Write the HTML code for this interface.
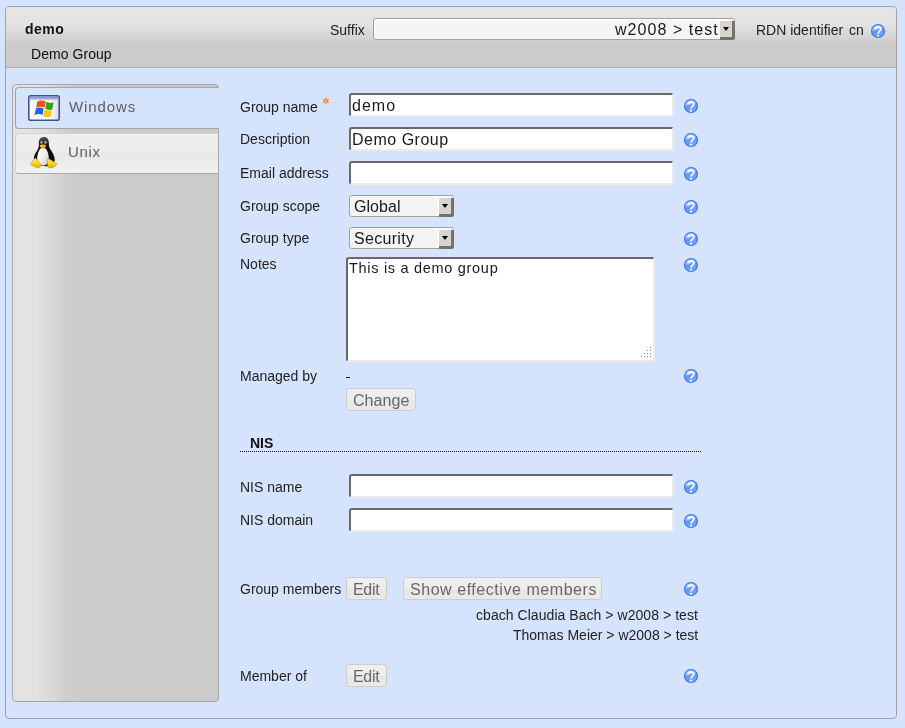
<!DOCTYPE html>
<html><head><meta charset="utf-8">
<style>
*{box-sizing:border-box;margin:0;padding:0}
html,body{width:905px;height:728px;overflow:hidden;background:#d6e3fc;font-family:"Liberation Sans",sans-serif;font-size:14px;color:#222}
.a{will-change:transform;position:absolute;white-space:nowrap;line-height:16px}
#box{position:absolute;left:5px;top:6px;width:892px;height:713px;border:1px solid #a3a3a3;border-radius:4px;background:#d6e3fc;overflow:hidden}
#hdr{position:absolute;left:0;top:0;width:890px;height:61px;background:linear-gradient(#e5e5e5 0px,#e3e3e3 17px,#cbcbcb 38px,#cbcbcb 61px);border-bottom:1px solid #aaa}
.inp{position:absolute;background:#fff;border-radius:3px;border-top:2px solid #6b6966;border-left:2px solid #6b6966;border-bottom:2px solid #ecebe9;border-right:2px solid #ecebe9}
.sel{position:absolute;background:#f4f4f4;border:1px solid #a0a0a0;border-radius:3px;box-shadow:inset 1px 1px 0 #fff}
.sel .btn{position:absolute;right:-1px;bottom:-1px;width:15px;height:19px;background:#d8d4d0;border-right:3px solid #75716d;border-bottom:3px solid #75716d;border-bottom-right-radius:3px;box-shadow:-1px -1px 0 #fff}
.sel .btn:after{content:"";position:absolute;left:3px;top:6px;border-left:3px solid transparent;border-right:3px solid transparent;border-top:4px solid #000}
.but{position:absolute;background:linear-gradient(#efefef 0%,#ededed 50%,#e6e6e6 51%,#e9e9e9 100%);border:1px solid #cdcdcd;border-radius:3px}
.help{position:absolute;width:16px;height:16px}
.c16{font-size:16px;line-height:18px;color:#1a1a1a}
.bt{font-size:16px;line-height:18px;color:#686868}
</style></head><body>
<svg width="0" height="0" style="position:absolute">
 <defs>
  <linearGradient id="hg" x1="0" y1="0" x2="0.3" y2="1">
   <stop offset="0" stop-color="#d9e6ff"/>
   <stop offset="0.42" stop-color="#9dbdfa"/>
   <stop offset="0.55" stop-color="#6195f5"/>
   <stop offset="1" stop-color="#7aa6f8"/>
  </linearGradient>
  
 </defs>
</svg>

<div id="box">
 <div id="hdr"></div>
</div>

<!-- header content (page coords) -->
<div class="a" style="left:25px;top:21px;font-weight:bold;color:#111;letter-spacing:0.45px">demo</div>
<div class="a" style="left:31px;top:46px;color:#111;letter-spacing:0.05px">Demo Group</div>
<div class="a" style="left:330px;top:22px">Suffix</div>
<div class="sel" style="left:373px;top:18px;width:362px;height:22px">
 <div class="a c16" style="left:241px;top:2px;letter-spacing:1.05px">w2008 &gt; test</div>
 <div class="btn"></div>
</div>
<div class="a" style="left:756px;top:22px">RDN identifier</div>
<div class="a" style="left:849px;top:22px">cn</div>
<svg class="help" style="left:870px;top:23px" viewBox="0 0 16 16"><circle cx="8" cy="8" r="6.45" fill="url(#hg)" stroke="#3a78f5" stroke-width="1.2"/> <path d="M5.3 6.3 C5.3 3.5 10.8 3.2 10.8 6.0 C10.8 7.9 8.2 8.2 8.0 10.5" fill="none" stroke="#fff" stroke-width="1.8"/> <rect x="7.0" y="11.8" width="1.9" height="1.8" fill="#fff"/></svg>

<!-- tabs -->
<div style="position:absolute;left:12px;top:84px;width:207px;height:618px;border:1px solid #a8a8a8;border-radius:4px;background:linear-gradient(90deg,#e3e3e3 0px,#e3e3e3 23px,#d8d8d8 40px,#cfcfcf 52px,#cbcbcb 63px,#cbcbcb 100%)"></div>
<div style="position:absolute;left:15px;top:87px;width:204px;height:42px;background:#d6e3fc;border:1px solid #a4a4a4;border-right:none;border-radius:4px 0 0 4px"></div>
<div style="position:absolute;left:15px;top:133px;width:204px;height:41px;background:linear-gradient(#eeeeee 0px,#ededed 18px,#e6e6e6 19px,#f2f2f2 39px);border:1px solid #d2d2d2;border-bottom-color:#a8a8a8;border-right-color:#a8a8a8;border-radius:4px 0 0 4px"></div>
<div class="a" style="left:69px;top:98px;font-size:15px;line-height:17px;color:#606060;letter-spacing:0.9px">Windows</div>
<div class="a" style="left:68px;top:143px;font-size:15px;line-height:17px;color:#606060;letter-spacing:0.65px">Unix</div>

<!-- Windows icon -->
<svg style="position:absolute;left:28px;top:95px" width="32" height="26" viewBox="0 0 32 26">
 <defs>
  <linearGradient id="wt" x1="0" y1="0" x2="0" y2="1"><stop offset="0" stop-color="#6f80c0"/><stop offset="1" stop-color="#d4d8ee"/></linearGradient>
  <linearGradient id="wb" x1="0" y1="0" x2="1" y2="0"><stop offset="0" stop-color="#ffffff"/><stop offset="0.7" stop-color="#f8f8fb"/><stop offset="1" stop-color="#dcdce8"/></linearGradient>
 </defs>
 <rect x="0.8" y="0.8" width="30.4" height="24.4" rx="2" fill="url(#wb)" stroke="#3d5596" stroke-width="1.6"/>
 <rect x="1.6" y="1.6" width="28.8" height="3.6" fill="url(#wt)"/>
 <path d="M9.2 6.6 Q13 4.6 17.6 6.4 L16.6 12.6 Q12.6 10.9 8.2 12.4 Z" fill="#f24f1c"/>
 <path d="M18.3 6.8 Q21.8 8.6 25.6 7.4 L24.3 14.6 Q21 15.8 17.3 13.8 Z" fill="#3aa316"/>
 <path d="M8 13.3 Q11.8 11.6 15.6 13.4 L14.6 19.8 Q10.6 18.2 6.4 19.9 Z" fill="#1f62f0"/>
 <path d="M16.3 14.6 Q19.8 16.4 23.7 15.2 L22.6 21.8 Q19 23 15.2 21 Z" fill="#fcc80f"/>
</svg>

<!-- Tux icon -->
<svg style="position:absolute;left:27px;top:134px" width="34" height="38" viewBox="0 0 34 38">
 <defs>
  <linearGradient id="tb" x1="0" y1="0" x2="1" y2="1"><stop offset="0" stop-color="#ffffff"/><stop offset="0.5" stop-color="#f2f2f2"/><stop offset="1" stop-color="#c4c4c4"/></linearGradient>
  <linearGradient id="tf" x1="0" y1="0" x2="0" y2="1"><stop offset="0" stop-color="#ffe86a"/><stop offset="0.6" stop-color="#f9d21a"/><stop offset="1" stop-color="#e0a800"/></linearGradient>
  <linearGradient id="th" x1="0" y1="0" x2="0" y2="1"><stop offset="0" stop-color="#555"/><stop offset="0.3" stop-color="#111"/><stop offset="1" stop-color="#000"/></linearGradient>
 </defs>
 <path d="M16.8 2.9 C13 2.9 11.7 6 11.8 9.5 C11.8 12.5 12 13.5 10.5 16 C8.5 19 7 21.5 6.8 25 L9 31.5 L24 32.5 L27.8 26.5 C27.8 22 25.5 18.5 23.5 15.5 C22 13 21.9 11.5 21.9 9 C21.9 5.5 20.5 2.9 16.8 2.9 Z" fill="url(#th)"/>
 <path d="M16 13.4 C12.6 13.4 10.2 19 10.2 24.5 C10.2 29 12.6 31.6 16 31.6 C19.5 31.6 21.8 29 21.8 24.5 C21.8 19 19.4 13.4 16 13.4 Z" fill="url(#tb)"/>
 <ellipse cx="14.5" cy="8.4" rx="1.2" ry="1.2" fill="#dcdcdc"/>
 <ellipse cx="18.4" cy="8.4" rx="1.2" ry="1.2" fill="#dcdcdc"/>
 <circle cx="14.8" cy="8.6" r="0.5" fill="#222"/>
 <circle cx="18.1" cy="8.6" r="0.5" fill="#222"/>
 <path d="M12.6 11.4 C13.6 10.2 18.2 10.2 19 11.4 C18.6 13.2 17 14.4 15.9 14.4 C14.8 14.4 13 13.2 12.6 11.4 Z" fill="#f9b916"/>
 <path d="M13.4 12.6 C14.5 13.4 17.2 13.4 18.2 12.6 C17.4 13.9 16.6 14.4 15.9 14.4 C15.1 14.4 14.2 13.9 13.4 12.6 Z" fill="#e48a10"/>
 <path d="M8.2 24 L3.4 29.6 C3.6 31.5 8 33.2 11.2 33.7 C12.8 33.8 14.2 32.5 14.1 31 C13 28.5 10.5 25.5 8.2 24 Z" fill="url(#tf)" stroke="#c08a00" stroke-width="0.5"/>
 <path d="M20.8 24.6 C23 25.2 26 27.5 30 30 C29 32 26 33.5 23.5 33.9 C21.5 33.9 20.3 32.5 20.4 30.5 C20.3 28.5 20.4 26.5 20.8 24.6 Z" fill="url(#tf)" stroke="#c08a00" stroke-width="0.5"/>
</svg>

<!-- form labels -->
<div class="a" style="left:240px;top:99px">Group name</div>
<svg style="position:absolute;left:322px;top:97px" width="8" height="8" viewBox="0 0 8 8">
 <path d="M4 0.3 L4.9 2.4 L7.3 1.9 L5.8 4 L7.3 6.1 L4.9 5.6 L4 7.7 L3.1 5.6 L0.7 6.1 L2.2 4 L0.7 1.9 L3.1 2.4 Z" fill="#f27b25"/>
 <circle cx="4" cy="3.6" r="1.2" fill="#f9b08a"/>
 <circle cx="4" cy="5" r="0.9" fill="#ffc42a"/>
</svg>
<div class="a" style="left:240px;top:131px">Description</div>
<div class="a" style="left:240px;top:165px">Email address</div>
<div class="a" style="left:240px;top:198px">Group scope</div>
<div class="a" style="left:240px;top:230px">Group type</div>
<div class="a" style="left:240px;top:256px">Notes</div>
<div class="a" style="left:240px;top:368px">Managed by</div>
<div class="a" style="left:250px;top:435px;font-weight:bold;color:#111">NIS</div>
<div style="position:absolute;left:240px;top:451px;width:462px;height:1px;background:repeating-linear-gradient(90deg,#000 0px,#000 1px,transparent 1px,transparent 2px)"></div>
<div class="a" style="left:240px;top:479px">NIS name</div>
<div class="a" style="left:240px;top:512px">NIS domain</div>
<div class="a" style="left:240px;top:581px">Group members</div>
<div class="a" style="left:240px;top:668px">Member of</div>

<!-- inputs -->
<div class="inp" style="left:349px;top:93px;width:325px;height:24px"><div class="a c16" style="left:1px;top:2px;letter-spacing:1px">demo</div></div>
<div class="inp" style="left:349px;top:127px;width:325px;height:24px"><div class="a c16" style="left:1px;top:2px;letter-spacing:0.5px">Demo Group</div></div>
<div class="inp" style="left:349px;top:161px;width:325px;height:24px"></div>
<div class="sel" style="left:349px;top:195px;width:105px;height:22px"><div class="a c16" style="left:4px;top:2px;letter-spacing:0.05px">Global</div><div class="btn"></div></div>
<div class="sel" style="left:349px;top:227px;width:105px;height:22px"><div class="a c16" style="left:4px;top:2px;letter-spacing:0.3px">Security</div><div class="btn"></div></div>
<div class="inp" style="left:346px;top:257px;width:309px;height:105px"><div class="a" style="left:1px;top:1px;font-size:14.5px;line-height:16px;color:#1a1a1a;letter-spacing:0.7px">This is a demo group</div>
 <svg style="position:absolute;right:1px;bottom:1px" width="12" height="12" viewBox="0 0 12 12" fill="#8a8a8a">
  <rect x="10" y="0" width="1" height="1"/><rect x="10" y="3" width="1" height="1"/><rect x="7" y="3" width="1" height="1"/>
  <rect x="10" y="6" width="1" height="1"/><rect x="7" y="6" width="1" height="1"/><rect x="4" y="6" width="1" height="1"/>
  <rect x="10" y="9" width="1" height="1"/><rect x="7" y="9" width="1" height="1"/><rect x="4" y="9" width="1" height="1"/><rect x="1" y="9" width="1" height="1"/>
 </svg>
</div>
<div style="position:absolute;left:346px;top:377px;width:4px;height:1px;background:#111"></div>
<div class="but" style="left:346px;top:388px;width:70px;height:23px"><div class="a bt" style="left:6px;top:3px;letter-spacing:0.05px">Change</div></div>
<div class="inp" style="left:349px;top:474px;width:325px;height:24px"></div>
<div class="inp" style="left:349px;top:508px;width:325px;height:24px"></div>
<div class="but" style="left:346px;top:577px;width:41px;height:23px"><div class="a bt" style="left:6px;top:3px;letter-spacing:-0.3px">Edit</div></div>
<div class="but" style="left:403px;top:577px;width:199px;height:23px"><div class="a bt" style="left:6px;top:3px;letter-spacing:0.55px">Show effective members</div></div>
<div class="a" style="right:207px;top:607px;letter-spacing:0.05px">cbach Claudia Bach &gt; w2008 &gt; test</div>
<div class="a" style="right:207px;top:627px">Thomas Meier &gt; w2008 &gt; test</div>
<div class="but" style="left:346px;top:664px;width:41px;height:23px"><div class="a bt" style="left:6px;top:3px;letter-spacing:-0.3px">Edit</div></div>

<!-- help icons -->
<svg class="help" style="left:683px;top:98px" viewBox="0 0 16 16"><circle cx="8" cy="8" r="6.45" fill="url(#hg)" stroke="#3a78f5" stroke-width="1.2"/> <path d="M5.3 6.3 C5.3 3.5 10.8 3.2 10.8 6.0 C10.8 7.9 8.2 8.2 8.0 10.5" fill="none" stroke="#fff" stroke-width="1.8"/> <rect x="7.0" y="11.8" width="1.9" height="1.8" fill="#fff"/></svg>
<svg class="help" style="left:683px;top:132px" viewBox="0 0 16 16"><circle cx="8" cy="8" r="6.45" fill="url(#hg)" stroke="#3a78f5" stroke-width="1.2"/> <path d="M5.3 6.3 C5.3 3.5 10.8 3.2 10.8 6.0 C10.8 7.9 8.2 8.2 8.0 10.5" fill="none" stroke="#fff" stroke-width="1.8"/> <rect x="7.0" y="11.8" width="1.9" height="1.8" fill="#fff"/></svg>
<svg class="help" style="left:683px;top:166px" viewBox="0 0 16 16"><circle cx="8" cy="8" r="6.45" fill="url(#hg)" stroke="#3a78f5" stroke-width="1.2"/> <path d="M5.3 6.3 C5.3 3.5 10.8 3.2 10.8 6.0 C10.8 7.9 8.2 8.2 8.0 10.5" fill="none" stroke="#fff" stroke-width="1.8"/> <rect x="7.0" y="11.8" width="1.9" height="1.8" fill="#fff"/></svg>
<svg class="help" style="left:683px;top:199px" viewBox="0 0 16 16"><circle cx="8" cy="8" r="6.45" fill="url(#hg)" stroke="#3a78f5" stroke-width="1.2"/> <path d="M5.3 6.3 C5.3 3.5 10.8 3.2 10.8 6.0 C10.8 7.9 8.2 8.2 8.0 10.5" fill="none" stroke="#fff" stroke-width="1.8"/> <rect x="7.0" y="11.8" width="1.9" height="1.8" fill="#fff"/></svg>
<svg class="help" style="left:683px;top:231px" viewBox="0 0 16 16"><circle cx="8" cy="8" r="6.45" fill="url(#hg)" stroke="#3a78f5" stroke-width="1.2"/> <path d="M5.3 6.3 C5.3 3.5 10.8 3.2 10.8 6.0 C10.8 7.9 8.2 8.2 8.0 10.5" fill="none" stroke="#fff" stroke-width="1.8"/> <rect x="7.0" y="11.8" width="1.9" height="1.8" fill="#fff"/></svg>
<svg class="help" style="left:683px;top:257px" viewBox="0 0 16 16"><circle cx="8" cy="8" r="6.45" fill="url(#hg)" stroke="#3a78f5" stroke-width="1.2"/> <path d="M5.3 6.3 C5.3 3.5 10.8 3.2 10.8 6.0 C10.8 7.9 8.2 8.2 8.0 10.5" fill="none" stroke="#fff" stroke-width="1.8"/> <rect x="7.0" y="11.8" width="1.9" height="1.8" fill="#fff"/></svg>
<svg class="help" style="left:683px;top:368px" viewBox="0 0 16 16"><circle cx="8" cy="8" r="6.45" fill="url(#hg)" stroke="#3a78f5" stroke-width="1.2"/> <path d="M5.3 6.3 C5.3 3.5 10.8 3.2 10.8 6.0 C10.8 7.9 8.2 8.2 8.0 10.5" fill="none" stroke="#fff" stroke-width="1.8"/> <rect x="7.0" y="11.8" width="1.9" height="1.8" fill="#fff"/></svg>
<svg class="help" style="left:683px;top:479px" viewBox="0 0 16 16"><circle cx="8" cy="8" r="6.45" fill="url(#hg)" stroke="#3a78f5" stroke-width="1.2"/> <path d="M5.3 6.3 C5.3 3.5 10.8 3.2 10.8 6.0 C10.8 7.9 8.2 8.2 8.0 10.5" fill="none" stroke="#fff" stroke-width="1.8"/> <rect x="7.0" y="11.8" width="1.9" height="1.8" fill="#fff"/></svg>
<svg class="help" style="left:683px;top:513px" viewBox="0 0 16 16"><circle cx="8" cy="8" r="6.45" fill="url(#hg)" stroke="#3a78f5" stroke-width="1.2"/> <path d="M5.3 6.3 C5.3 3.5 10.8 3.2 10.8 6.0 C10.8 7.9 8.2 8.2 8.0 10.5" fill="none" stroke="#fff" stroke-width="1.8"/> <rect x="7.0" y="11.8" width="1.9" height="1.8" fill="#fff"/></svg>
<svg class="help" style="left:683px;top:581px" viewBox="0 0 16 16"><circle cx="8" cy="8" r="6.45" fill="url(#hg)" stroke="#3a78f5" stroke-width="1.2"/> <path d="M5.3 6.3 C5.3 3.5 10.8 3.2 10.8 6.0 C10.8 7.9 8.2 8.2 8.0 10.5" fill="none" stroke="#fff" stroke-width="1.8"/> <rect x="7.0" y="11.8" width="1.9" height="1.8" fill="#fff"/></svg>
<svg class="help" style="left:683px;top:668px" viewBox="0 0 16 16"><circle cx="8" cy="8" r="6.45" fill="url(#hg)" stroke="#3a78f5" stroke-width="1.2"/> <path d="M5.3 6.3 C5.3 3.5 10.8 3.2 10.8 6.0 C10.8 7.9 8.2 8.2 8.0 10.5" fill="none" stroke="#fff" stroke-width="1.8"/> <rect x="7.0" y="11.8" width="1.9" height="1.8" fill="#fff"/></svg>
</body></html>
